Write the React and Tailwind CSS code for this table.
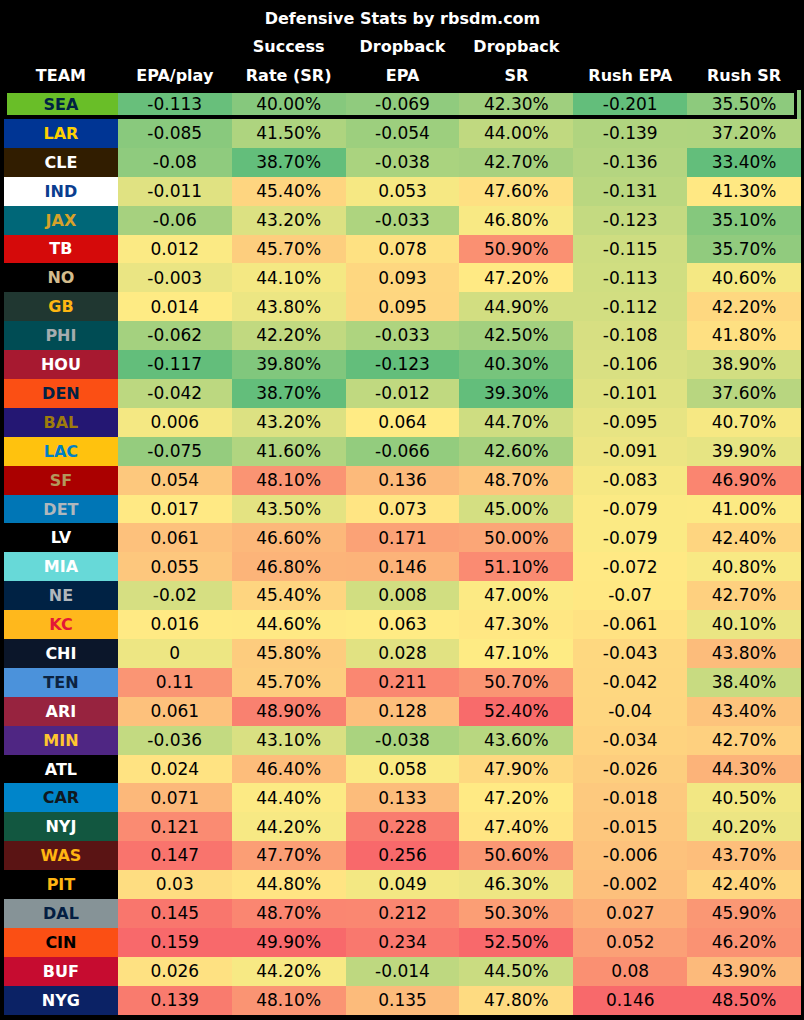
import React from "react";

const rows = [
  ["SEA", "bg-[#69BE28] text-[#002244]", "-0.113", "40.00%", "-0.069", "42.30%", "-0.201", "35.50%"],
  ["LAR", "bg-[#003594] text-[#FFD100]", "-0.085", "41.50%", "-0.054", "44.00%", "-0.139", "37.20%"],
  ["CLE", "bg-[#311D00] text-white", "-0.08", "38.70%", "-0.038", "42.70%", "-0.136", "33.40%"],
  ["IND", "bg-white text-[#0A3D8F]", "-0.011", "45.40%", "0.053", "47.60%", "-0.131", "41.30%"],
  ["JAX", "bg-[#006778] text-[#D7A22A]", "-0.06", "43.20%", "-0.033", "46.80%", "-0.123", "35.10%"],
  ["TB", "bg-[#D50A0A] text-white", "0.012", "45.70%", "0.078", "50.90%", "-0.115", "35.70%"],
  ["NO", "bg-black text-[#D3BC8D]", "-0.003", "44.10%", "0.093", "47.20%", "-0.113", "40.60%"],
  ["GB", "bg-[#203731] text-[#FFB612]", "0.014", "43.80%", "0.095", "44.90%", "-0.112", "42.20%"],
  ["PHI", "bg-[#004C54] text-[#A5ACAF]", "-0.062", "42.20%", "-0.033", "42.50%", "-0.108", "41.80%"],
  ["HOU", "bg-[#A71930] text-white", "-0.117", "39.80%", "-0.123", "40.30%", "-0.106", "38.90%"],
  ["DEN", "bg-[#FB4F14] text-[#002244]", "-0.042", "38.70%", "-0.012", "39.30%", "-0.101", "37.60%"],
  ["BAL", "bg-[#241773] text-[#9E7C0C]", "0.006", "43.20%", "0.064", "44.70%", "-0.095", "40.70%"],
  ["LAC", "bg-[#FFC20E] text-[#0080C6]", "-0.075", "41.60%", "-0.066", "42.60%", "-0.091", "39.90%"],
  ["SF", "bg-[#AA0000] text-[#B3995D]", "0.054", "48.10%", "0.136", "48.70%", "-0.083", "46.90%"],
  ["DET", "bg-[#0076B6] text-[#B0B7BC]", "0.017", "43.50%", "0.073", "45.00%", "-0.079", "41.00%"],
  ["LV", "bg-black text-white", "0.061", "46.60%", "0.171", "50.00%", "-0.079", "42.40%"],
  ["MIA", "bg-[#67D9D8] text-white", "0.055", "46.80%", "0.146", "51.10%", "-0.072", "40.80%"],
  ["NE", "bg-[#002244] text-[#B0B7BC]", "-0.02", "45.40%", "0.008", "47.00%", "-0.07", "42.70%"],
  ["KC", "bg-[#FFB81C] text-[#E31837]", "0.016", "44.60%", "0.063", "47.30%", "-0.061", "40.10%"],
  ["CHI", "bg-[#0B162A] text-white", "0", "45.80%", "0.028", "47.10%", "-0.043", "43.80%"],
  ["TEN", "bg-[#4B92DB] text-[#0C2340]", "0.11", "45.70%", "0.211", "50.70%", "-0.042", "38.40%"],
  ["ARI", "bg-[#97233F] text-white", "0.061", "48.90%", "0.128", "52.40%", "-0.04", "43.40%"],
  ["MIN", "bg-[#4F2683] text-[#FFC62F]", "-0.036", "43.10%", "-0.038", "43.60%", "-0.034", "42.70%"],
  ["ATL", "bg-black text-white", "0.024", "46.40%", "0.058", "47.90%", "-0.026", "44.30%"],
  ["CAR", "bg-[#0085CA] text-[#101820]", "0.071", "44.40%", "0.133", "47.20%", "-0.018", "40.50%"],
  ["NYJ", "bg-[#125740] text-white", "0.121", "44.20%", "0.228", "47.40%", "-0.015", "40.20%"],
  ["WAS", "bg-[#5A1414] text-[#FFB612]", "0.147", "47.70%", "0.256", "50.60%", "-0.006", "43.70%"],
  ["PIT", "bg-black text-[#FFB612]", "0.03", "44.80%", "0.049", "46.30%", "-0.002", "42.40%"],
  ["DAL", "bg-[#869397] text-[#041E42]", "0.145", "48.70%", "0.212", "50.30%", "0.027", "45.90%"],
  ["CIN", "bg-[#FB4F14] text-black", "0.159", "49.90%", "0.234", "52.50%", "0.052", "46.20%"],
  ["BUF", "bg-[#C60C30] text-white", "0.026", "44.20%", "-0.014", "44.50%", "0.08", "43.90%"],
  ["NYG", "bg-[#0B2265] text-white", "0.139", "48.10%", "0.135", "47.80%", "0.146", "48.50%"],
];

// excel 3-color scale: min green, median yellow, max red
const GREEN = [99, 190, 123];
const YELLOW = [255, 235, 132];
const RED = [248, 105, 107];

const mix = (a, b, t) => a.map((v, i) => Math.round(v + (b[i] - v) * t));

const scales = [2, 3, 4, 5, 6, 7].map((col) => {
  const vals = rows.map((r) => parseFloat(r[col])).sort((a, b) => a - b);
  const n = vals.length;
  const mid = n % 2 ? vals[(n - 1) / 2] : (vals[n / 2 - 1] + vals[n / 2]) / 2;
  return { min: vals[0], mid, max: vals[n - 1] };
});

const cellColor = (value, s) => {
  const v = parseFloat(value);
  let c;
  if (v <= s.mid) c = mix(GREEN, YELLOW, s.mid === s.min ? 1 : (v - s.min) / (s.mid - s.min));
  else c = mix(YELLOW, RED, (v - s.mid) / (s.max - s.mid));
  return `rgb(${c[0]},${c[1]},${c[2]})`;
};

const HeadCell = ({ children }) => (
  <div className="flex items-center justify-center">{children}</div>
);

const App = () => {
  return (
    <div className="h-[1020px] w-[804px] bg-black pb-[5.1px] pl-[4px] pr-[3px] pt-[5px] font-['DejaVu_Sans',sans-serif]">
      {/* Header */}
      <div className="text-[16px] font-bold text-white">
        <div className="flex h-[28.3px] items-center justify-center">Defensive Stats by rbsdm.com</div>
        <div className="grid h-[28.3px] grid-cols-7">
          <HeadCell />
          <HeadCell />
          <HeadCell>Success</HeadCell>
          <HeadCell>Dropback</HeadCell>
          <HeadCell>Dropback</HeadCell>
          <HeadCell />
          <HeadCell />
        </div>
        <div className="grid h-[28.3px] grid-cols-7">
          <HeadCell>TEAM</HeadCell>
          <HeadCell>EPA/play</HeadCell>
          <HeadCell>Rate (SR)</HeadCell>
          <HeadCell>EPA</HeadCell>
          <HeadCell>SR</HeadCell>
          <HeadCell>Rush EPA</HeadCell>
          <HeadCell>Rush SR</HeadCell>
        </div>
      </div>

      {/* Rows */}
      {rows.map((r, idx) => (
        <div
          key={r[0]}
          className={`relative grid grid-cols-7 ${idx === 0 ? "h-[29.1px]" : "h-[28.9px]"}`}
        >
          <div className={`flex items-center justify-center pt-[1px] text-[16px] font-bold ${r[1]}`}>{r[0]}</div>
          {r.slice(2).map((v, i) => (
            <div
              key={i}
              className="flex items-center justify-center pt-[1px] text-[17px] text-black"
              style={{ backgroundColor: cellColor(v, scales[i]) }}
            >
              {v}
            </div>
          ))}
          {idx === 0 && (
            <div className="pointer-events-none absolute bottom-[-0.5px] left-0 right-[4px] top-0 border-[3px] border-b-[4px] border-black" />
          )}
        </div>
      ))}
    </div>
  );
};

export default App;
